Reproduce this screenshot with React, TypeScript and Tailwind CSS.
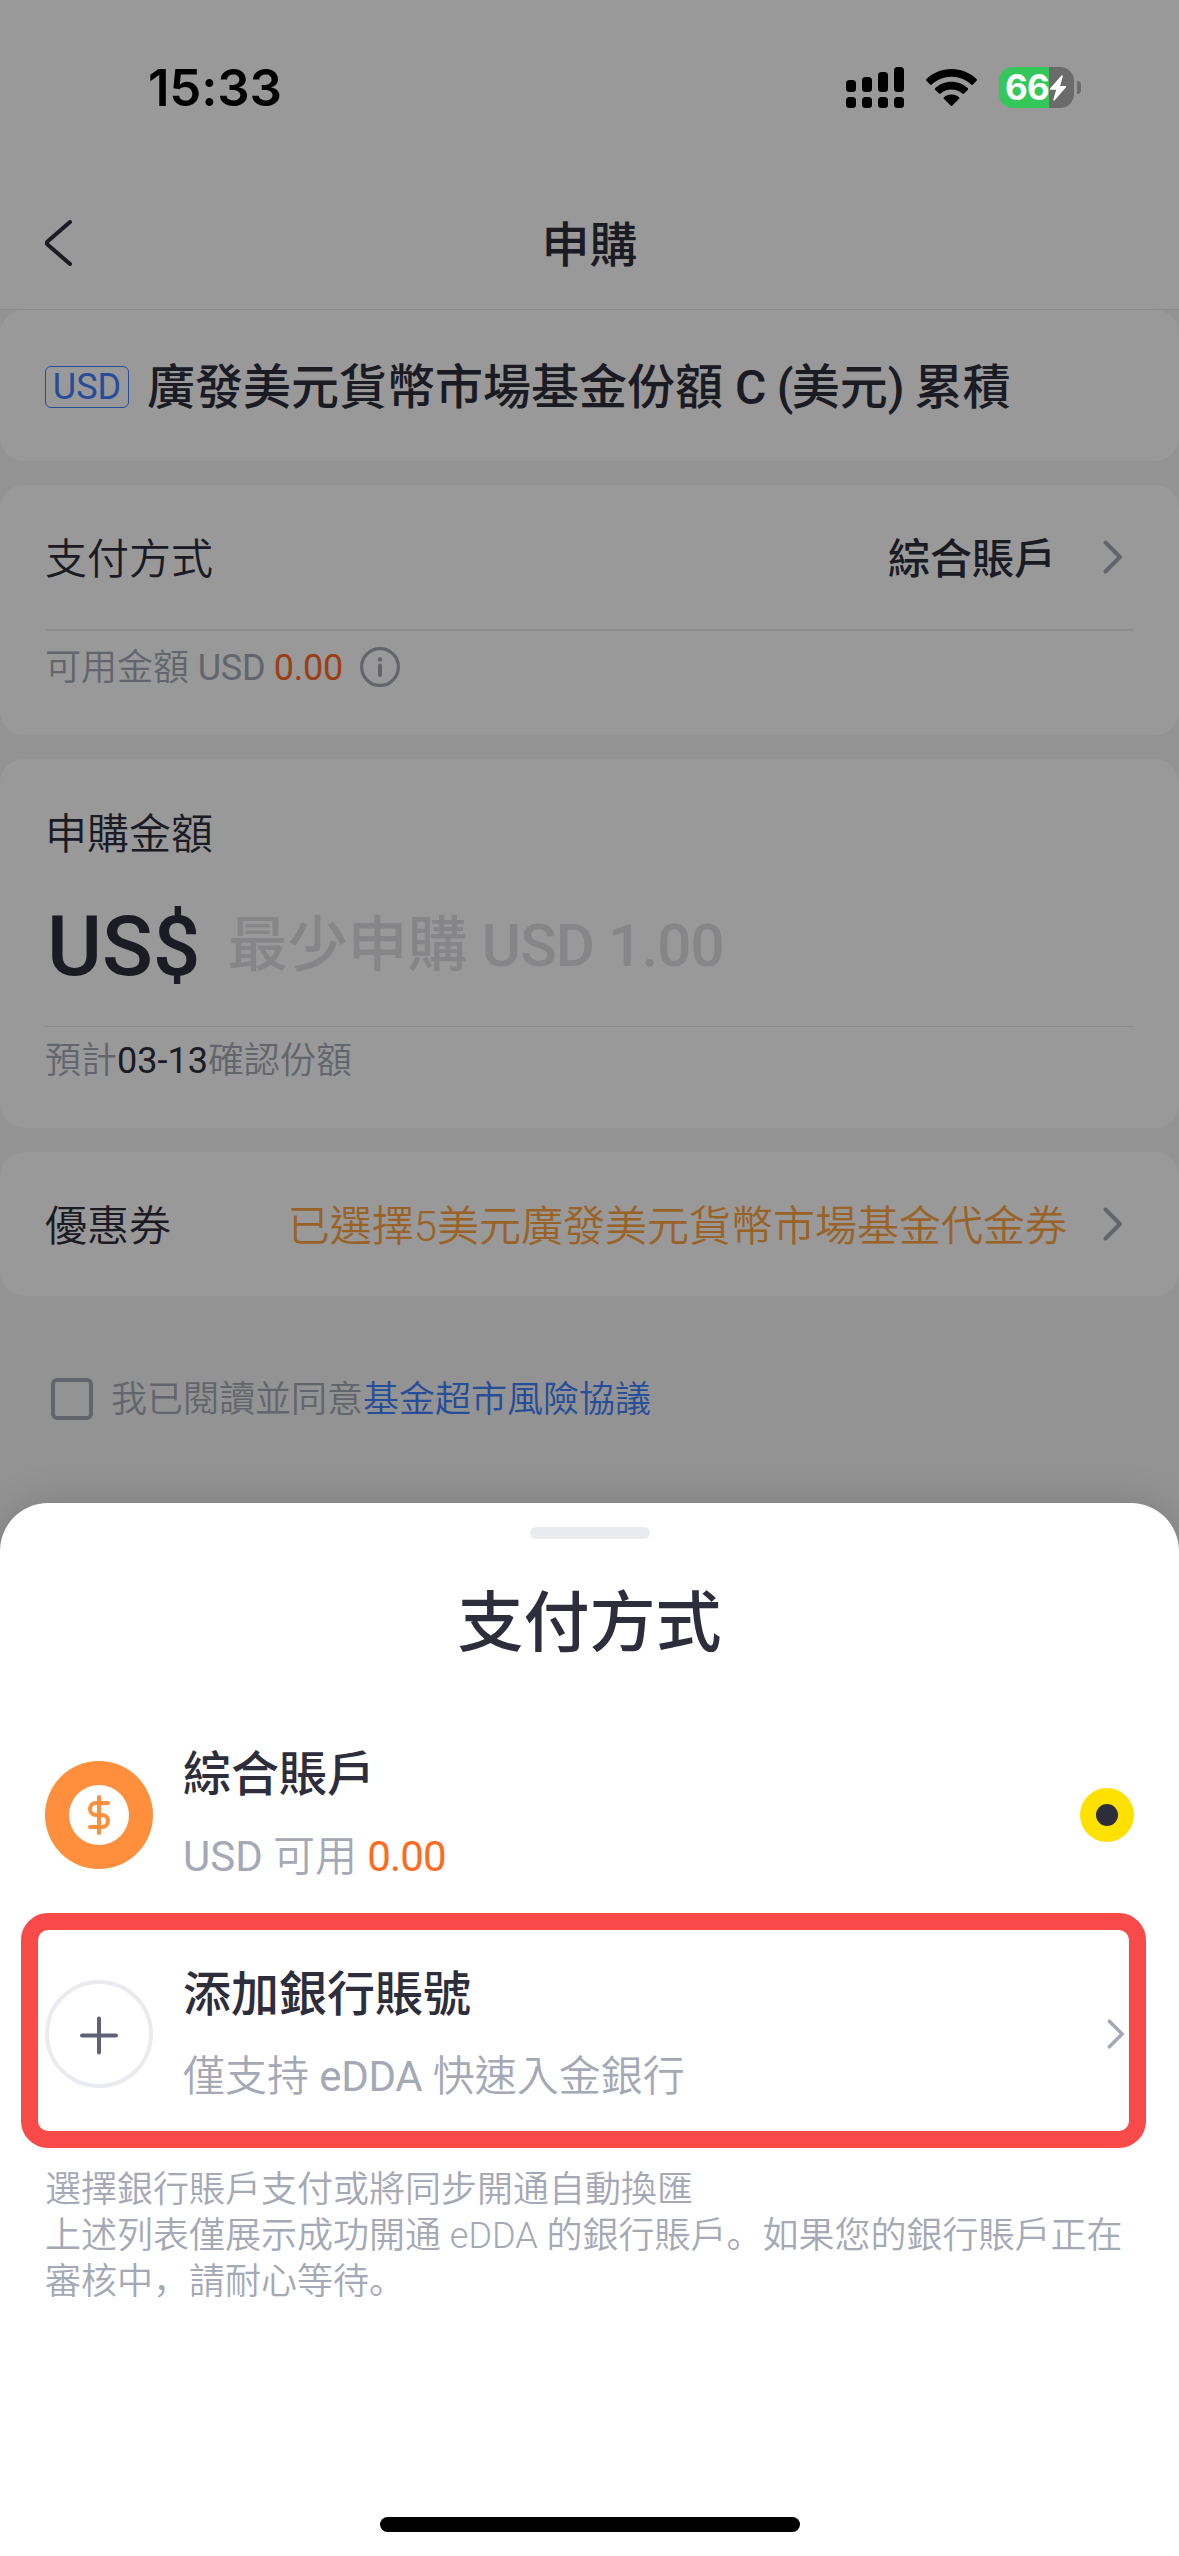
import React, { useState } from 'react';

const sans = "font-['Roboto','Noto_Sans_CJK_TC',sans-serif]";

function StatusBar() {
  return (
    <div className="relative z-20 flex h-[176px] items-start justify-between pl-[148px] pr-[98px] pt-[60px] text-black">
      <span className="font-['Inter',sans-serif] text-[51px] font-semibold leading-[56px] tracking-[-0.2px]">15:33</span>
      <div className="flex items-center pt-[7px]">
        <svg width="58" height="41" viewBox="0 0 58 41" className="mr-[22px]">
          <rect x="0" y="13" width="10" height="12" rx="3.5" />
          <rect x="16" y="10" width="10" height="15" rx="3.5" />
          <rect x="32" y="5" width="10" height="20" rx="3.5" />
          <rect x="48" y="0" width="10" height="25" rx="3.5" />
          <rect x="0" y="30" width="10" height="11" rx="3.5" />
          <rect x="16" y="30" width="10" height="11" rx="3.5" />
          <rect x="32" y="30" width="10" height="11" rx="3.5" />
          <rect x="48" y="30" width="10" height="11" rx="3.5" />
        </svg>
        <svg width="51" height="37" viewBox="0 0 51 37" className="mr-[22px]">
          <path d="M25.5 0C35.3 0 44.2 3.8 50.5 10.1a1.2 1.2 0 0 1 0 1.7l-3.6 3.7a1.2 1.2 0 0 1-1.7 0C40.1 10.6 33.2 7.7 25.5 7.7S10.9 10.6 5.8 15.5a1.2 1.2 0 0 1-1.7 0L.5 11.8a1.2 1.2 0 0 1 0-1.7C6.8 3.8 15.7 0 25.5 0Z" />
          <path d="M25.5 12.8c6.3 0 12 2.4 16.2 6.3a1.2 1.2 0 0 1 0 1.8l-3.7 3.7a1.2 1.2 0 0 1-1.7 0c-2.9-2.6-6.6-4.1-10.8-4.1s-7.9 1.5-10.8 4.1a1.2 1.2 0 0 1-1.7 0l-3.7-3.7a1.2 1.2 0 0 1 0-1.8c4.2-3.9 9.9-6.3 16.2-6.3Z" />
          <path d="M25.5 25.6c2.9 0 5.5 1 7.4 2.7a1.2 1.2 0 0 1 0 1.8l-6.5 6.5a1.2 1.2 0 0 1-1.8 0l-6.5-6.5a1.2 1.2 0 0 1 0-1.8c1.9-1.7 4.5-2.7 7.4-2.7Z" />
        </svg>
        <div className="flex h-[41px] w-[75px] items-center rounded-[14px] bg-[linear-gradient(90deg,#34c759_50px,#6b6b6b_50px)] pl-[6px]">
          <span className="font-['Inter',sans-serif] text-[35px] font-bold leading-[41px] tracking-[-0.8px] text-white">66</span>
          <svg width="18" height="26" viewBox="0 0 18 26" fill="#fff">
            <path d="M12.5.6 1 13.6c-.5.6-.2 1.2.6 1.2h5.6L4.4 24.6c-.3 1 .6 1.5 1.3.7L17 12.2c.5-.6.2-1.2-.6-1.2h-5.3l2.7-9.7c.3-1-.6-1.5-1.3-.7Z" />
          </svg>
        </div>
        <div className="ml-[3px] h-[13px] w-[4px] rounded-r-full bg-[#6b6b6b]" />
      </div>
    </div>
  );
}

function Chevron({ className = '' }: { className?: string }) {
  return (
    <svg width="20" height="34" viewBox="0 0 20 34" fill="none" className={className}>
      <path d="M2.5 2.5 17 17 2.5 31.5" stroke="#a5a8b5" strokeWidth="4" strokeLinecap="round" strokeLinejoin="round" />
    </svg>
  );
}

function InfoIcon() {
  return (
    <svg width="40" height="40" viewBox="0 0 40 40" fill="none" className="ml-[17px]">
      <circle cx="20" cy="20" r="18.4" stroke="#a5a8b5" strokeWidth="3.2" />
      <circle cx="20" cy="12.4" r="2.2" fill="#a5a8b5" />
      <path d="M20 18.5v9.5" stroke="#a5a8b5" strokeWidth="4" strokeLinecap="round" />
    </svg>
  );
}

function PurchasePage() {
  const [agreed, setAgreed] = useState(false);

  return (
    <div className="text-[#2d2d3b]">
      <header className="grid h-[134px] grid-cols-3 items-center border-b border-[#e8e8e8] bg-white px-[44px]">
        <svg width="28" height="46" viewBox="0 0 28 46" fill="none">
          <path d="M26 2 3.5 21.5a2 2 0 0 0 0 3L26 44" stroke="#2d2d3b" strokeWidth="4" strokeLinecap="round" />
        </svg>
        <h1 className="pt-[7px] text-center text-[48px] font-medium leading-[60px]">申購</h1>
      </header>

      <main className="flex flex-col gap-[24px]">
        <section className="flex h-[151px] items-center rounded-[24px] bg-white pl-[45px] pt-[3px]">
          <span className="flex h-[42px] w-[84px] items-center justify-center rounded-[6px] border-[1.5px] border-[#4080ff] text-[36px] leading-none text-[#4080ff]">USD</span>
          <h2 className="ml-[18px] whitespace-pre pt-[2px] text-[48px] font-medium leading-[60px]">
            廣發美元貨幣市場基金份額 C<span className="tracking-[-1.5px]"> (</span>美元<span className="tracking-[-2px]">)</span> 累積
          </h2>
        </section>

        <section className="h-[250px] rounded-[24px] bg-white px-[45px]">
          <div className="flex h-[146px] items-center border-b-2 border-[#ebebef] pr-[11px] text-[42px]">
            <span className="pt-[5px] font-[350]">支付方式</span>
            <span className="ml-auto mr-[47px] pt-[5px] font-medium">綜合賬戶</span>
            <Chevron />
          </div>
          <div className="flex h-[72px] items-center text-[36px] font-[350] text-[#a5a8b5]">
            <span className="whitespace-pre pt-[2px]">
              可用金額 <span className="font-normal tracking-[-0.3px]">USD <span className="text-[#ff6a21]">0.00</span></span>
            </span>
            <InfoIcon />
          </div>
        </section>

        <section className="h-[369px] rounded-[24px] bg-white px-[45px]">
          <h3 className="pt-[46px] text-[42px] font-[350] leading-[60px]">申購金額</h3>
          <div className="flex h-[162px] items-center border-b border-[#e8e8ec]">
            <span className="pl-[2px] pt-[2px] text-[84px] font-medium leading-none">US$</span>
            <span className="ml-[27px] whitespace-pre text-[60px] font-medium leading-none text-[#dfdfe3]">
              最少申購<span className="tracking-[-0.8px]"> USD 1.00</span>
            </span>
          </div>
          <p className="text-[36px] font-[350] leading-[68px] text-[#a5a8b5]">
            預計<span className="font-normal text-[#2d2d3b]">03-13</span>確認份額
          </p>
        </section>

        <section className="flex h-[144px] items-center rounded-[24px] bg-white pl-[45px] pr-[56px] text-[42px] font-[350]">
          <span className="pt-[5px]">優惠券</span>
          <span className="ml-auto mr-[36px] pt-[5px] text-[#ffa544]">已選擇5美元廣發美元貨幣市場基金代金券</span>
          <Chevron />
        </section>
      </main>

      <div className="flex items-center pl-[51px] pt-[74px] text-[36px] font-[350] text-[#a5a8b5]">
        <button
          type="button"
          role="checkbox"
          aria-checked={agreed}
          aria-label="我已閱讀並同意"
          onClick={() => setAgreed(!agreed)}
          className="mr-[18px] h-[42px] w-[42px] rounded-[6px] border-4 border-[#a5a8b5]"
        />
        <span className="pt-[3px]">我已閱讀並同意<a className="text-[#4080ff]">基金超市風險協議</a></span>
      </div>
    </div>
  );
}

function PaymentSheet() {
  return (
    <div className="absolute inset-x-0 bottom-0 z-20 flex h-[1053px] flex-col rounded-t-[48px] bg-white text-[#2d2d3b] shadow-[0_0_40px_rgba(0,0,0,0.15)]">
      <div className="mx-auto mt-[24px] h-[12px] w-[120px] rounded-full bg-[#eaebf1]" />
      <h2 className="mt-[45px] text-center text-[66px] font-medium leading-[80px]">支付方式</h2>

      <div className="mt-[61px] flex h-[180px] items-center px-[45px]">
        <svg width="108" height="108" viewBox="0 0 108 108" fill="none">
          <circle cx="54" cy="54" r="54" fill="#ff8f3c" />
          <circle cx="54" cy="54" r="30" fill="#fff" />
          <path d="M54 36v36M63 42H51a6 6 0 0 0 0 12h6a6 6 0 0 1 0 12H45" stroke="#ff8f3c" strokeWidth="4" strokeLinecap="round" />
        </svg>
        <div className="ml-[30px]">
          <div className="text-[48px] font-medium leading-[84px]">綜合賬戶</div>
          <div className="whitespace-pre text-[42px] font-[350] leading-[80px] text-[#a5a8b5]">
            <span className="font-normal">USD</span> 可用 <span className="font-normal tracking-[-0.8px] text-[#ff6a21]">0.00</span>
          </div>
        </div>
        <div className="ml-auto flex h-[54px] w-[54px] items-center justify-center rounded-full bg-[#ffe100]">
          <div className="h-[22px] w-[22px] rounded-full bg-[#2d2d3b]" />
        </div>
      </div>

      <div className="ml-[21px] mt-[8px] flex h-[235px] w-[1125px] items-center rounded-[27px] border-[17px] border-[#f84a48] pl-[7px] pr-[3px] pt-[6px]">
        <svg width="108" height="108" viewBox="0 0 108 108" fill="none">
          <circle cx="54" cy="54" r="52" stroke="#eaebf1" strokeWidth="4" />
          <path d="M37 55.5h34M54 38.5v34" stroke="#606178" strokeWidth="4" strokeLinecap="round" />
        </svg>
        <div className="ml-[30px] pt-[2px]">
          <div className="text-[48px] font-medium leading-[84px]">添加銀行賬號</div>
          <div className="text-[42px] font-[350] leading-[80px] text-[#a5a8b5]">
            僅支持 <span className="font-normal tracking-[-0.3px]">eDDA</span> 快速入金銀行
          </div>
        </div>
        <Chevron className="ml-auto h-[30px]" />
      </div>

      <div
        lang="zh-CN"
        className="mt-[19px] px-[45px] font-['Roboto','Noto_Sans_CJK_SC',sans-serif] text-[36px] font-[350] leading-[46px] text-[#a5a8b5]"
      >
        選擇銀行賬戶支付或將同步開通自動換匯
        <br />
        上述列表僅展示成功開通 eDDA 的銀行賬戶。如果您的銀行賬戶正在審核中，請耐心等待。
      </div>

      <div className="mx-auto mb-[24px] mt-auto h-[15px] w-[420px] rounded-full bg-black" />
    </div>
  );
}

export default function App() {
  return (
    <div lang="zh-HK" className={`relative h-[2556px] w-[1179px] overflow-hidden bg-[#f5f5f5] ${sans}`}>
      <div className="absolute inset-x-0 top-0 h-[176px] bg-white" />
      <div className="absolute inset-0 z-10 bg-black/40" />
      <StatusBar />
      <PurchasePage />
      <PaymentSheet />
    </div>
  );
}
